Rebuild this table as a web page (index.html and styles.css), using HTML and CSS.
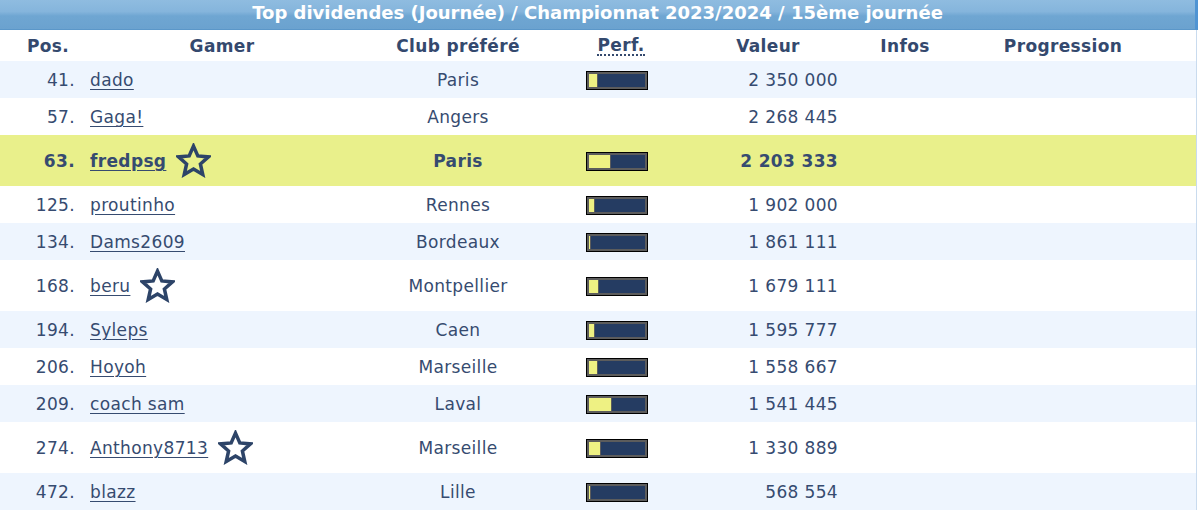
FILE: index.html
```html
<!DOCTYPE html>
<html lang="fr">
<head>
<meta charset="utf-8">
<title>Top dividendes</title>
<link rel="stylesheet" href="styles.css">
</head>
<body>
<div class="panel">
  <div class="title">Top dividendes (Journée) / Championnat 2023/2024 / 15ème journée</div>
  <table class="ranking">
    <colgroup>
      <col class="c-pos"><col class="c-gamer"><col class="c-club"><col class="c-perf"><col class="c-val"><col class="c-info"><col class="c-prog"><col class="c-end">
    </colgroup>
    <thead>
      <tr>
        <th class="h-pos">Pos.</th>
        <th>Gamer</th>
        <th>Club préféré</th>
        <th class="h-perf"><span class="abbr">Perf.</span></th>
        <th>Valeur</th>
        <th>Infos</th>
        <th>Progression</th>
        <th></th>
      </tr>
    </thead>
    <tbody>
      <tr class="alt">
        <td class="pos">41.</td><td class="gamer"><a href="#">dado</a></td><td class="club">Paris</td>
        <td class="perf"><span class="bar"><span class="fill" style="width:8px"></span></span></td>
        <td class="val">2 350 000</td><td></td><td></td><td></td>
      </tr>
      <tr>
        <td class="pos">57.</td><td class="gamer"><a href="#">Gaga!</a></td><td class="club">Angers</td>
        <td class="perf"></td>
        <td class="val">2 268 445</td><td></td><td></td><td></td>
      </tr>
      <tr class="me">
        <td class="pos">63.</td><td class="gamer"><a href="#">fredpsg</a><svg class="star" viewBox="0 0 34 34"><polygon points="17,3 21.2,12.6 31.5,13.5 23.7,20.4 26,30.6 17,25.3 8,30.6 10.3,20.4 2.5,13.5 12.8,12.6"/></svg></td><td class="club">Paris</td>
        <td class="perf"><span class="bar"><span class="fill" style="width:21px"></span></span></td>
        <td class="val">2 203 333</td><td></td><td></td><td></td>
      </tr>
      <tr>
        <td class="pos">125.</td><td class="gamer"><a href="#">proutinho</a></td><td class="club">Rennes</td>
        <td class="perf"><span class="bar"><span class="fill" style="width:5px"></span></span></td>
        <td class="val">1 902 000</td><td></td><td></td><td></td>
      </tr>
      <tr class="alt">
        <td class="pos">134.</td><td class="gamer"><a href="#">Dams2609</a></td><td class="club">Bordeaux</td>
        <td class="perf"><span class="bar"><span class="fill" style="width:1px"></span></span></td>
        <td class="val">1 861 111</td><td></td><td></td><td></td>
      </tr>
      <tr class="tall">
        <td class="pos">168.</td><td class="gamer"><a href="#">beru</a><svg class="star" viewBox="0 0 34 34"><polygon points="17,3 21.2,12.6 31.5,13.5 23.7,20.4 26,30.6 17,25.3 8,30.6 10.3,20.4 2.5,13.5 12.8,12.6"/></svg></td><td class="club">Montpellier</td>
        <td class="perf"><span class="bar"><span class="fill" style="width:9px"></span></span></td>
        <td class="val">1 679 111</td><td></td><td></td><td></td>
      </tr>
      <tr class="alt">
        <td class="pos">194.</td><td class="gamer"><a href="#">Syleps</a></td><td class="club">Caen</td>
        <td class="perf"><span class="bar"><span class="fill" style="width:5px"></span></span></td>
        <td class="val">1 595 777</td><td></td><td></td><td></td>
      </tr>
      <tr>
        <td class="pos">206.</td><td class="gamer"><a href="#">Hoyoh</a></td><td class="club">Marseille</td>
        <td class="perf"><span class="bar"><span class="fill" style="width:8px"></span></span></td>
        <td class="val">1 558 667</td><td></td><td></td><td></td>
      </tr>
      <tr class="alt">
        <td class="pos">209.</td><td class="gamer"><a href="#">coach sam</a></td><td class="club">Laval</td>
        <td class="perf"><span class="bar"><span class="fill" style="width:22px"></span></span></td>
        <td class="val">1 541 445</td><td></td><td></td><td></td>
      </tr>
      <tr class="tall">
        <td class="pos">274.</td><td class="gamer"><a href="#">Anthony8713</a><svg class="star" viewBox="0 0 34 34"><polygon points="17,3 21.2,12.6 31.5,13.5 23.7,20.4 26,30.6 17,25.3 8,30.6 10.3,20.4 2.5,13.5 12.8,12.6"/></svg></td><td class="club">Marseille</td>
        <td class="perf"><span class="bar"><span class="fill" style="width:11px"></span></span></td>
        <td class="val">1 330 889</td><td></td><td></td><td></td>
      </tr>
      <tr class="alt">
        <td class="pos">472.</td><td class="gamer"><a href="#">blazz</a></td><td class="club">Lille</td>
        <td class="perf"><span class="bar"><span class="fill" style="width:1px"></span></span></td>
        <td class="val">568 554</td><td></td><td></td><td></td>
      </tr>
    </tbody>
  </table>
</div>
</body>
</html>
```
FILE: styles.css
```css
html, body {
  margin: 0;
  padding: 0;
  background: #ffffff;
}
body {
  font-family: "DejaVu Sans", Verdana, sans-serif;
  font-size: 17px;
  letter-spacing: 0.35px;
  color: #364b70;
  width: 1198px;
  height: 511px;
  overflow: hidden;
}
.panel {
  width: 1198px;
}
.title {
  height: 29px;
  line-height: 25px;
  font-size: 18px;
  letter-spacing: 0;
  border-bottom: 1px solid #5b97c9;
  border-right: 3px solid #4f94d3;
  box-sizing: content-box;
  background: linear-gradient(#8fbce0 0%, #85b5dc 40%, #6fa6d2 55%, #6ba2cf 100%);
  color: #ffffff;
  font-weight: bold;
  text-align: center;
  width: 1195px;
}
.ranking {
  width: 1196px;
  border-collapse: collapse;
  table-layout: fixed;
  border-right: 1px solid #c9dbee;
}
.c-pos { width: 84px; }
.c-gamer { width: 276px; }
.c-club { width: 196px; }
.c-perf { width: 122px; }
.c-val { width: 180px; }
.c-info { width: 94px; }
.c-prog { width: 222px; }
.c-end { width: 22px; }

thead th {
  height: 31px;
  padding: 0;
  font-weight: bold;
  text-align: center;
  color: #34496e;
  background: #ffffff;
  vertical-align: middle;
}
th.h-pos { padding-left: 12px; }
th.h-perf { padding-left: 8px; }
.abbr {
  border-bottom: 2px dotted #34496e;
  line-height: 18px;
  display: inline-block;
}
tbody td {
  height: 37px;
  padding: 0;
  vertical-align: middle;
  white-space: nowrap;
  background: #ffffff;
}
tbody tr.alt td { background: #eef5fe; }
tbody tr.tall td { height: 51px; }
tbody tr.me td {
  height: 51px;
  background: #e9f08b;
  font-weight: bold;
}
td.pos {
  text-align: right;
  padding-right: 9px;
}
td.gamer {
  padding-left: 6px;
}
td.gamer a {
  color: #364b70;
  text-decoration: underline;
  text-underline-offset: 3px;
  vertical-align: middle;
}
.star {
  width: 35px;
  height: 35px;
  margin-left: 10px;
  vertical-align: middle;
}
.star polygon {
  fill: none;
  stroke: #2d4468;
  stroke-width: 3.4;
  stroke-linejoin: miter;
}
td.club { text-align: center; }
td.perf { text-align: center; }
td.val {
  text-align: right;
  padding-right: 20px;
}
.bar {
  display: inline-block;
  width: 60px;
  height: 17px;
  border: 1px solid #000000;
  box-shadow: inset 0 0 0 2px #5c5c5c;
  background: #253c62;
  vertical-align: middle;
  position: relative;
  text-align: left;
  padding: 0;
  box-sizing: content-box;
}
.fill {
  position: absolute;
  left: 2px;
  top: 2px;
  bottom: 2px;
  background: #eef183;
  border-right: 1px solid #5c5c5c;
}
```
